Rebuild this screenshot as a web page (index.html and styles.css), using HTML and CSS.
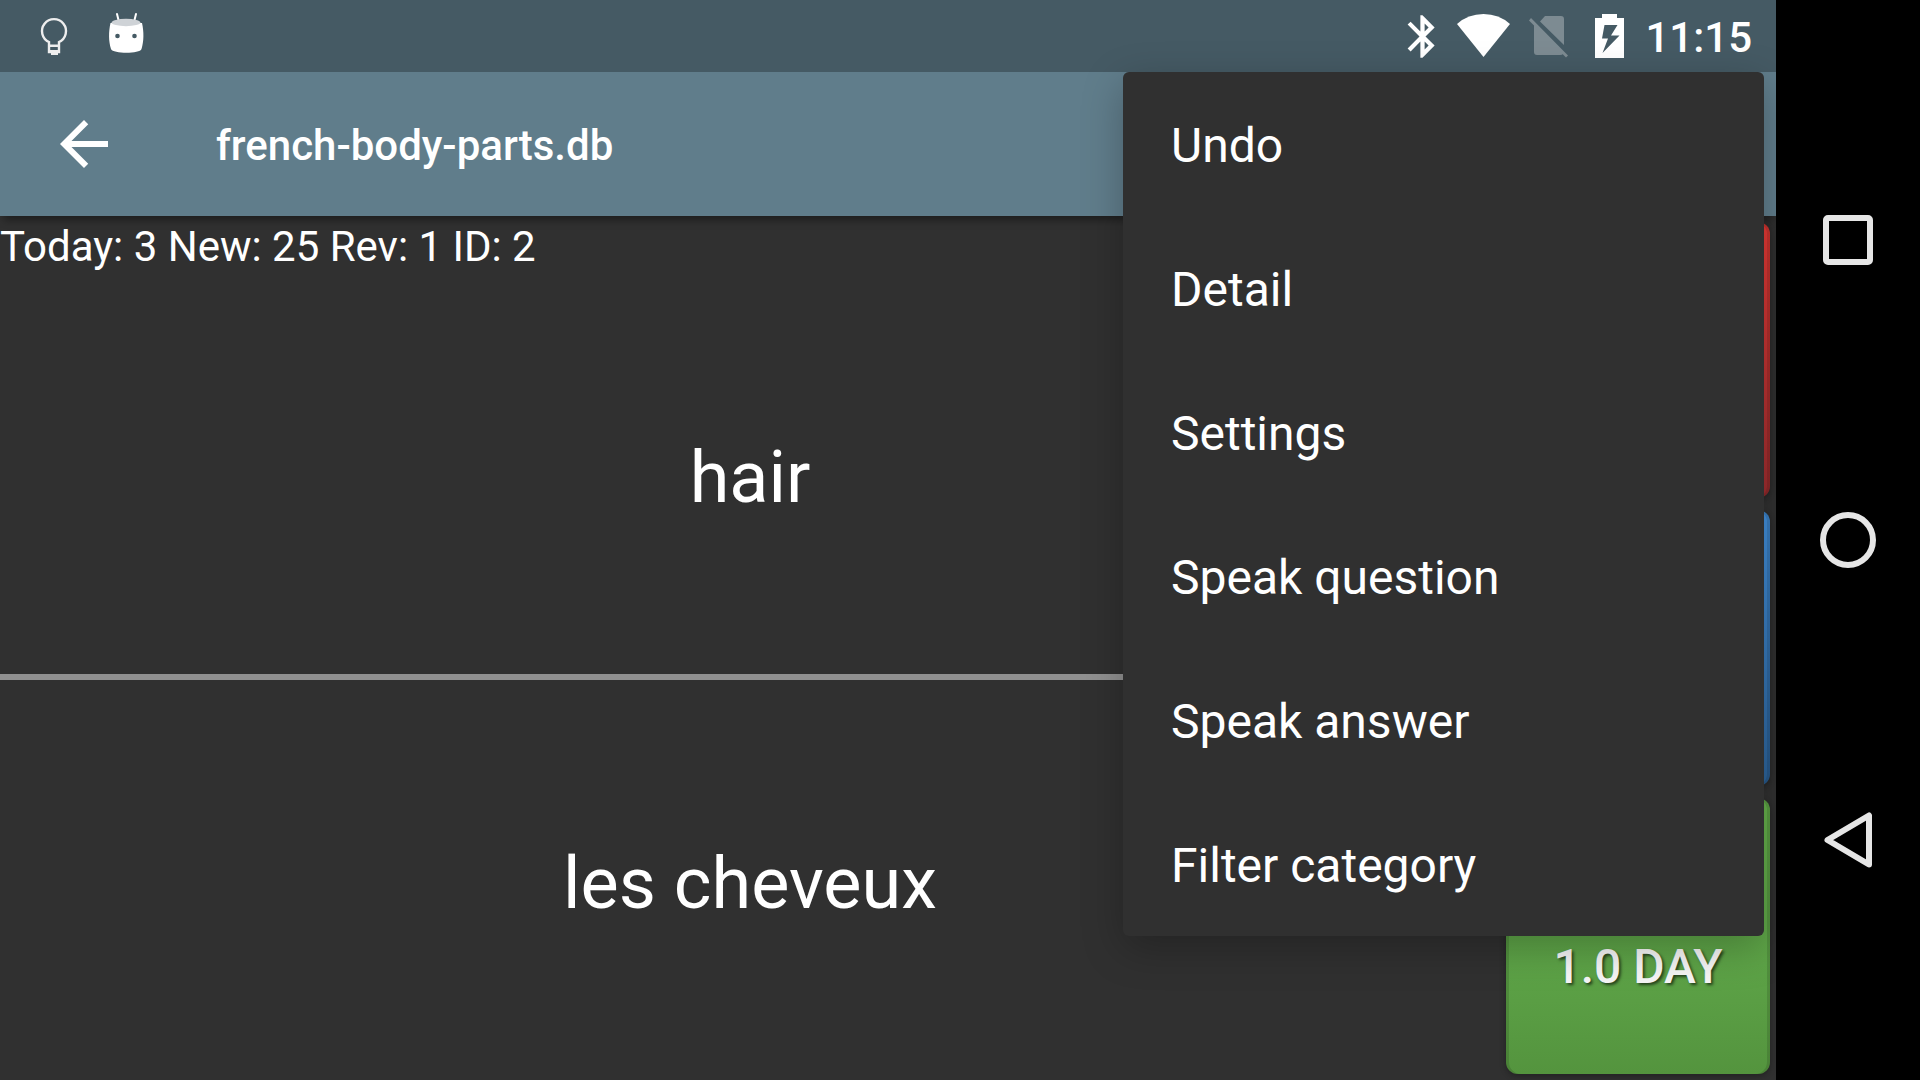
FILE: index.html
```
<!DOCTYPE html>
<html lang="en">
<head>
<meta charset="utf-8">
<meta name="viewport" content="width=device-width, initial-scale=1">
<title>french-body-parts.db</title>
<link rel="stylesheet" href="styles.css">
</head>
<body>
<div class="screen">
  <div class="app">
    <header class="status-bar">
      <div class="notifications">
        <svg class="note-icon" viewBox="0 0 60 72" aria-hidden="true">
          <path d="M25 52V42A12 12 0 1 1 35 42V52Z" fill="none" stroke="#eee" stroke-width="2.400"/>
          <path d="M24 44.500h12v2.500H24zM24 50h12v2.500h-2v2.500h-7v-2.500h-3z" fill="#eee"/>
        </svg>
        <svg class="note-icon" viewBox="0 0 60 72" aria-hidden="true">
          <path d="M27 14l2 8M46 14l-2 8" stroke="#fff" stroke-width="2" stroke-linecap="round"/>
          <path d="M20.500 23C18.500 32 18.500 41 21 49C23 54 50 54 51.500 49C54 41 54 32 52 23Z" fill="#fff"/>
          <ellipse cx="36" cy="22.500" rx="14.500" ry="3.700" fill="#cfd3d7"/>
          <circle cx="27.500" cy="36" r="2.300" fill="#455a64"/>
          <circle cx="44.500" cy="36" r="2.300" fill="#455a64"/>
        </svg>
      </div>
      <div class="system">
        <svg class="sys-icon" viewBox="0 0 64 72" aria-hidden="true">
          <path transform="translate(8 11) scale(2.125)" fill="#fff" d="M17.710 7.710L12 2h-1v7.590L6.410 5 5 6.410 10.590 12 5 17.590 6.410 19 11 14.410V22h1l5.710-5.710-4.300-4.290 4.300-4.290zM13 5.830l1.880 1.880L13 9.590V5.830zm1.880 10.460L13 18.170v-3.760l1.880 1.880z"/>
        </svg>
        <svg class="sys-icon" viewBox="0 0 64 72" aria-hidden="true">
          <path d="M4 24Q15 14 30.500 14T57 24L30.500 57Z" fill="#fff"/>
        </svg>
        <svg class="sys-icon" viewBox="0 0 64 72" aria-hidden="true">
          <path d="M28 16H44Q47 16 47 19V45L23 21.500ZM17 24.500L46 53.500Q45.500 55 43 55H20Q17 55 17 52ZM14 18L51 55.500L49 57.500L12 20.500Z" fill="#7d8b92"/>
        </svg>
        <svg class="sys-icon" viewBox="0 0 64 72" aria-hidden="true">
          <path fill-rule="evenodd" d="M21 14h15v4h7v40H14V18h7zM23.500 25L21 38.500h6L21.500 53L38.500 35.500H30L36.500 25Z" fill="#fff"/>
        </svg>
        <time class="clock">11:15</time>
      </div>
    </header>

    <div class="toolbar">
      <button class="back" type="button" aria-label="Back">
        <svg viewBox="0 0 24 24" aria-hidden="true"><path fill="#fff" d="M20 11H7.830l5.590-5.590L12 4l-8 8 8 8 1.410-1.410L7.830 13H20v-2z"/></svg>
      </button>
      <h1 class="title">french-body-parts.db</h1>
    </div>

    <main class="study">
      <section class="cards">
        <p class="stats">Today: 3 New: 25 Rev: 1 ID: 2</p>
        <div class="card">hair</div>
        <div class="card answer">les cheveux</div>
      </section>
      <div class="grades">
        <button class="grade red" type="button" aria-label="Forgot"></button>
        <button class="grade blue" type="button" aria-label="Hard"></button>
        <button class="grade green" type="button">1.0 DAY</button>
      </div>
    </main>

    <div class="menu" role="menu">
      <button class="menu-item" type="button" role="menuitem">Undo</button>
      <button class="menu-item" type="button" role="menuitem">Detail</button>
      <button class="menu-item" type="button" role="menuitem">Settings</button>
      <button class="menu-item" type="button" role="menuitem">Speak question</button>
      <button class="menu-item" type="button" role="menuitem">Speak answer</button>
      <button class="menu-item" type="button" role="menuitem">Filter category</button>
    </div>
  </div>

  <nav class="nav-bar">
    <button class="nav-key" type="button" aria-label="Recent apps">
      <svg viewBox="0 0 72 72" aria-hidden="true"><rect x="14" y="14" width="44" height="44" rx="2"/></svg>
    </button>
    <button class="nav-key" type="button" aria-label="Home">
      <svg viewBox="0 0 72 72" aria-hidden="true"><circle cx="36" cy="36" r="25"/></svg>
    </button>
    <button class="nav-key" type="button" aria-label="Back">
      <svg viewBox="0 0 72 72" aria-hidden="true"><path d="M15.500 36L57 11.500V60.500Z"/></svg>
    </button>
  </nav>
</div>
</body>
</html>
```
FILE: styles.css
```
* {
  box-sizing: border-box;
}

body {
  margin: 0;
  background: #000;
  color: #fff;
  font-family: Roboto, "Noto Sans", sans-serif;
}

button {
  margin: 0;
  padding: 0;
  border: 0;
  background: none;
  color: inherit;
  font: inherit;
}

svg {
  display: block;
}

.screen {
  display: grid;
  grid-template-columns: minmax(0, 1fr) 144px;
  min-height: 100vh;
}

.app {
  position: relative;
  display: flex;
  flex-direction: column;
  overflow: hidden;
  background: #303030;
}

/* Status bar */

.status-bar {
  display: flex;
  justify-content: space-between;
  height: 72px;
  padding: 0 24px;
  background: #455a64;
}

.notifications,
.system {
  display: flex;
  align-items: center;
}

.notifications {
  gap: 6px;
}

.note-icon {
  width: 60px;
  height: 72px;
}

.sys-icon {
  width: 64px;
  height: 72px;
}

.clock {
  padding-top: 3px;
  font-size: 42px;
  font-weight: 500;
}

/* Toolbar */

.toolbar {
  position: relative;
  display: flex;
  align-items: center;
  gap: 96px;
  height: 144px;
  padding: 0 48px;
  background: #607d8b;
  box-shadow: 0 8px 8px -4px rgba(0, 0, 0, 0.4);
}

.back,
.back svg {
  width: 72px;
  height: 72px;
}

.title {
  margin: 0;
  padding-top: 3px;
  font-size: 42px;
  font-weight: 500;
}

/* Flash card and grading */

.study {
  display: flex;
  flex: 1;
}

.cards {
  display: flex;
  flex: 1;
  flex-direction: column;
}

.stats {
  margin: 0;
  padding-top: 4px;
  font-size: 42px;
  line-height: 54px;
}

.card {
  display: flex;
  flex: 1 0 0;
  align-items: center;
  justify-content: center;
  padding-top: 6px;
  font-size: 72px;
}

.answer {
  box-sizing: content-box;
  border-top: 6px solid #909090;
}

.grades {
  display: flex;
  flex-direction: column;
  gap: 12px;
  width: 276px;
  padding: 6px;
}

.grade {
  flex: 1;
  padding-top: 62px;
  border-radius: 12px;
  color: #f5f5f5;
  font-size: 48px;
  font-weight: 500;
  line-height: 56px;
  text-shadow: 2px 2px 3px rgba(0, 0, 0, 0.6);
  box-shadow: inset 3px 0 rgba(0, 0, 0, 0.12), inset -3px 0 rgba(0, 0, 0, 0.12), 0 2px 6px rgba(0, 0, 0, 0.3);
}

.red {
  background: linear-gradient(#e53935, #9c2d2f);
}

.blue {
  background: linear-gradient(#4290dc, #2c6298);
}

.green {
  background: linear-gradient(#65b04b, #5da347 60%, #54943e);
}

/* Overflow menu */

.menu {
  position: absolute;
  top: 72px;
  right: 12px;
  width: 641px;
  border-radius: 6px;
  background: #303030;
  box-shadow: 0 12px 40px rgba(0, 0, 0, 0.25);
}

.menu-item {
  display: block;
  width: 100%;
  height: 144px;
  padding: 3px 48px 0;
  font-size: 48px;
  text-align: left;
}

/* System navigation */

.nav-bar {
  display: flex;
  flex-direction: column;
  padding: 90px 0;
  background: #000;
}

.nav-key {
  display: flex;
  flex: 1;
  align-items: center;
  justify-content: center;
}

.nav-key svg {
  width: 72px;
  height: 72px;
  fill: none;
  stroke: #e6e6e6;
  stroke-width: 6;
  stroke-linejoin: round;
}
```
